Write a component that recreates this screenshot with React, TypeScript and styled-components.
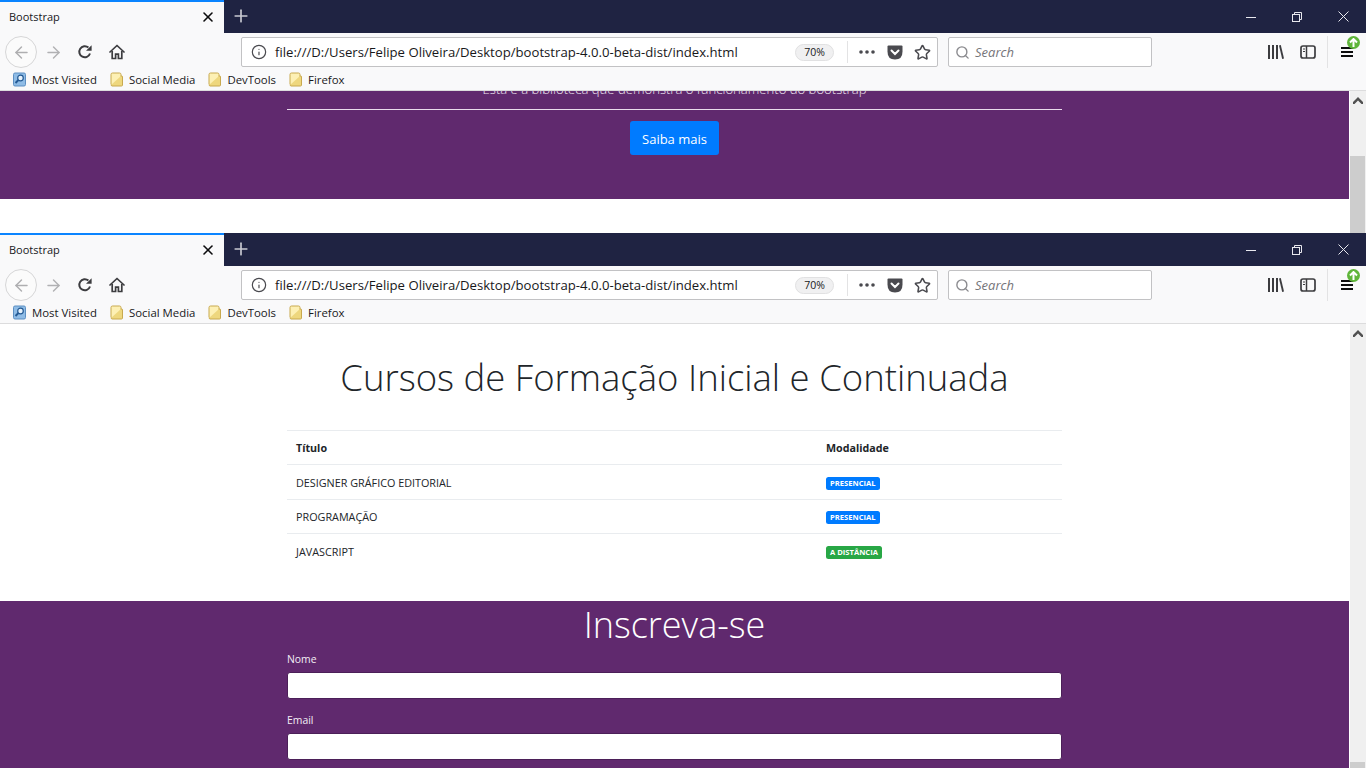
import React from 'react';
import styled, { createGlobalStyle } from 'styled-components';
import { ArrowLeft, ArrowRight, Info, Plus, Search, Star, X } from 'lucide-react';

const GlobalStyle = createGlobalStyle`
  html, body {
    margin: 0;
    padding: 0;
    height: 768px;
    overflow: hidden;
    background: #fff;
    font-family: "Open Sans", "Noto Sans", sans-serif;
  }
  * { box-sizing: border-box; }
`;

const Screen = styled.div`
  width: 1366px;
  height: 768px;
  display: flex;
  flex-direction: column;
  overflow: hidden;
`;

const Win = styled.section<{ $height: number }>`
  height: ${p => p.$height}px;
  flex: none;
  display: flex;
  flex-direction: column;
  overflow: hidden;
`;

const TabStrip = styled.div`
  height: 33px;
  flex: none;
  display: flex;
  align-items: stretch;
  background: #1f2342;
`;

const Tab = styled.div`
  width: 224px;
  display: flex;
  align-items: center;
  justify-content: space-between;
  padding: 0 8px 2px 9px;
  background: #f9f9fa;
  border-top: 2px solid #0a84ff;
  font-size: 11px;
  color: #18181a;
`;

const NewTab = styled.div`
  width: 34px;
  padding-bottom: 2px;
  display: flex;
  align-items: center;
  justify-content: center;
  color: #c9cad2;
`;

const Grow = styled.div`
  flex: 1;
`;

const WinButton = styled.div`
  width: 46px;
  display: flex;
  align-items: center;
  justify-content: center;
  color: #e8e8ee;
`;

const NavBar = styled.div`
  height: 36px;
  flex: none;
  display: flex;
  align-items: center;
  padding: 2px 0 0 5px;
  background: #f9f9fa;
`;

const BackButton = styled.div`
  width: 32px;
  height: 32px;
  border: 1px solid #d6d6d7;
  border-radius: 50%;
  display: flex;
  align-items: center;
  justify-content: center;
  color: #aeaeb0;
  background: #fbfbfb;
`;

const NavButton = styled.div<{ $muted?: boolean }>`
  width: 32px;
  height: 32px;
  flex: none;
  display: flex;
  align-items: center;
  justify-content: center;
  color: ${p => (p.$muted ? '#b1b1b3' : '#3c3c3f')};
`;

const UrlBar = styled.div`
  margin-left: 108px;
  width: 697px;
  height: 30px;
  flex: none;
  display: flex;
  align-items: center;
  background: #fff;
  border: 1px solid #c2c2c4;
  border-radius: 2px;
  padding-left: 9px;
  color: #4a4a4f;
`;

const UrlText = styled.span`
  margin-left: 8px;
  width: 521px;
  font-size: 13.15px;
  color: #18181a;
  white-space: nowrap;
`;

const ZoomPill = styled.span`
  width: 39px;
  height: 17px;
  border: 1px solid #e1e1e2;
  border-radius: 9px;
  background: #f0f0f1;
  font-size: 10.5px;
  line-height: 15px;
  text-align: center;
  color: #18181a;
`;

const UrlDivider = styled.span`
  width: 1px;
  height: 22px;
  margin: 0 5px 0 13px;
  background: #e3e3e4;
`;

const PageAction = styled.span`
  width: 28px;
  height: 24px;
  display: flex;
  align-items: center;
  justify-content: center;
  color: #4a4a4f;
`;

const SearchBox = styled.div`
  margin-left: 10px;
  width: 204px;
  height: 30px;
  flex: none;
  display: flex;
  align-items: center;
  gap: 5px;
  padding-left: 6px;
  background: #fff;
  border: 1px solid #c2c2c4;
  border-radius: 2px;
  font-size: 13px;
  font-style: italic;
  color: #75757a;
`;

const ToolGroup = styled.div`
  margin-left: 108px;
  display: flex;
  align-items: center;
`;

const ToolDivider = styled.span`
  width: 1px;
  height: 32px;
  margin: 0 3px;
  background: #e3e3e4;
`;

const MenuButton = styled(NavButton)`
  position: relative;
`;

const UpdateBadge = styled.span`
  position: absolute;
  top: 0;
  right: 3px;
  width: 13px;
  height: 13px;
  border-radius: 50%;
  background: #5fb53a;
  display: flex;
  align-items: center;
  justify-content: center;
`;

const Bookmarks = styled.div`
  height: 22px;
  flex: none;
  display: flex;
  align-items: center;
  padding: 0 0 1px 13px;
  background: #f9f9fa;
  border-bottom: 1px solid #dcdcdd;
  font-size: 11.4px;
  color: #18181a;
`;

const Bookmark = styled.div`
  display: flex;
  align-items: center;
  gap: 6px;
  margin-right: 13px;
  white-space: nowrap;
`;

const Body = styled.div`
  flex: 1;
  min-height: 0;
  display: flex;
`;

const Viewport = styled.main`
  flex: 1;
  min-width: 0;
  overflow: hidden;
  background: #fff;
`;

const ScrollTrack = styled.div<{ $thumbOffset: number }>`
  width: 17px;
  flex: none;
  display: flex;
  flex-direction: column;
  align-items: flex-start;
  padding-top: 6px;
  background: #f0f0f0;
  border-left: 1px solid #fff;
  color: #505050;

  svg {
    margin-left: 3px;
    margin-bottom: ${p => p.$thumbOffset}px;
    flex: none;
  }
`;

const Thumb = styled.div`
  width: 15px;
  flex: 1;
  background: #cdcdcd;
`;

const Purple = styled.div`
  background: #60296e;
  color: #fff;
`;

const Container = styled.div`
  width: 775px;
  margin: 0 auto;
`;

const Hero = styled(Purple)`
  height: 108px;
  text-align: center;
`;

const Lead = styled.p`
  margin: 0;
  position: relative;
  top: -12px;
  height: 18px;
  line-height: 20px;
  font-size: 13.1px;
  font-weight: 300;
  color: #efe7f2;
  white-space: nowrap;
`;

const Rule = styled.hr`
  margin: 0 0 11px;
  border: 0;
  border-top: 1px solid #e9dcec;
  height: 1px;
`;

const PrimaryButton = styled.a`
  display: inline-block;
  width: 89px;
  height: 34px;
  line-height: 36px;
  background: #007bff;
  border-radius: 3px;
  color: #fff;
  font-size: 13px;
  text-align: center;
`;

const Courses = styled.div`
  padding: 29px 0 32px;
`;

const Title = styled.h1`
  margin: 0 0 29px;
  font-size: 36.5px;
  line-height: 48px;
  font-weight: 300;
  color: #212529;
  text-align: center;
  white-space: nowrap;
`;

const Table = styled.table`
  width: 100%;
  border-collapse: collapse;
  font-size: 10.8px;
  color: #212529;
  table-layout: fixed;

  tbody tr:nth-child(odd) td {
    height: 35px;
  }
  tbody tr:nth-child(even) td {
    height: 34px;
  }
`;

const Th = styled.th<{ $width?: number }>`
  width: ${p => (p.$width ? `${p.$width}px` : 'auto')};
  height: 34px;
  padding: 0 9px;
  text-align: left;
  font-size: 10.7px;
  font-weight: 700;
  border-top: 1px solid #e9ecef;
`;

const Td = styled.td`
  padding: 0 9px;
  border-top: 1px solid #e9ecef;
`;

const Badge = styled.span<{ $tone: 'blue' | 'green' }>`
  display: inline-block;
  height: 13px;
  padding: 0 4px;
  border-radius: 2.5px;
  background: ${p => (p.$tone === 'blue' ? '#007bff' : '#28a745')};
  color: #fff;
  font-size: 7.6px;
  line-height: 13px;
  font-weight: 700;
  vertical-align: middle;
`;

const Signup = styled(Purple)`
  height: 170px;
`;

const SignupTitle = styled.h2`
  margin: 0 0 2px;
  font-size: 36px;
  line-height: 48px;
  font-weight: 300;
  text-align: center;
`;

const Field = styled.div`
  margin-bottom: 13px;
`;

const FieldLabel = styled.label`
  display: block;
  height: 21px;
  line-height: 17px;
  font-size: 10.4px;
  color: #f3eef5;
`;

const TextInput = styled.input`
  display: block;
  width: 100%;
  height: 27px;
  background: #fff;
  border: 1px solid #4b1f58;
  border-radius: 3px;
`;

const Svg = styled.svg`
  display: block;
  flex: none;
`;

const FolderIcon = () => (
  <Svg width="13" height="15" viewBox="0 0 13 15">
    <path d="M1 2.5 Q1 1 2.5 1 H9.5 Q11 1 11 2.5 V13 H2 Q1 13 1 12 Z" fill="#fdf0b4" stroke="#c8a94f" />
    <path d="M11 4 H12 Q12.5 4 12.5 5 V13 Q12.5 14 11.5 14 H2 Q1.5 14 1 13" fill="#eed77e" stroke="#c8a94f" />
  </Svg>
);

const MostVisitedIcon = () => (
  <Svg width="13" height="15" viewBox="0 0 13 15">
    <rect x="0.5" y="1" width="12" height="13" rx="1.5" fill="#8fbce6" stroke="#5c8fc2" />
    <circle cx="7.5" cy="6" r="2.8" fill="#e6f2fc" stroke="#245a94" strokeWidth="1.2" />
    <path d="M5.4 8 L2.5 11" stroke="#245a94" strokeWidth="1.8" />
  </Svg>
);

const ReloadIcon = () => (
  <Svg width="16" height="16" viewBox="0 0 16 16" fill="none" stroke="currentColor">
    <path d="M13 9.5 A5.5 5.5 0 1 1 11.4 3.6" strokeWidth="2" />
    <path d="M9 6.8 H14.6 V1.2 Z" fill="currentColor" stroke="none" />
  </Svg>
);

const HomeIcon = () => (
  <Svg width="16" height="16" viewBox="0 0 16 16" fill="none" stroke="currentColor" strokeWidth="1.7">
    <path d="M1 8 L8 1.5 L15 8" strokeLinejoin="round" strokeLinecap="round" />
    <path d="M3.2 7 V14.5 H6.6 V10.2 H9.4 V14.5 H12.8 V7" />
  </Svg>
);

const PocketIcon = () => (
  <Svg width="16" height="15" viewBox="0 0 16 15">
    <path d="M1.5 0.5 H14.5 Q15.5 0.5 15.5 1.5 V6.5 Q15.5 14.5 8 14.5 Q0.5 14.5 0.5 6.5 V1.5 Q0.5 0.5 1.5 0.5 Z" fill="currentColor" />
    <path d="M4.5 5.5 L8 9 L11.5 5.5" fill="none" stroke="#fff" strokeWidth="2" strokeLinecap="round" />
  </Svg>
);

const LibraryIcon = () => (
  <Svg width="16" height="14" viewBox="0 0 16 14" fill="currentColor">
    <rect x="0" y="0" width="2" height="14" />
    <rect x="4" y="0" width="2" height="14" />
    <rect x="8" y="0" width="2" height="14" />
    <path d="M11 0.5 L12.8 0 L16 13.5 L14.2 14 Z" />
  </Svg>
);

const SidebarIcon = () => (
  <Svg width="16" height="14" viewBox="0 0 16 14" fill="none" stroke="currentColor">
    <rect x="1" y="1" width="14" height="12" rx="2" strokeWidth="1.7" />
    <path d="M6.5 1 V13" strokeWidth="1.5" />
    <path d="M3 4 H5 M3 6.5 H5" strokeWidth="1" />
  </Svg>
);

const MenuIcon = () => (
  <Svg width="12" height="12" viewBox="0 0 12 12" fill="#0c0c0d">
    <rect x="0" y="1" width="12" height="2" />
    <rect x="0" y="5" width="12" height="2" />
    <rect x="0" y="9" width="12" height="2" />
  </Svg>
);

const MinimizeIcon = () => (
  <Svg width="10" height="10" viewBox="0 0 10 10" stroke="currentColor">
    <path d="M0 5.5 H10" />
  </Svg>
);

const RestoreIcon = () => (
  <Svg width="10" height="10" viewBox="0 0 10 10" fill="none" stroke="currentColor">
    <rect x="0.5" y="2.5" width="7" height="7" />
    <path d="M2.5 2.5 V0.5 H9.5 V7.5 H7.5" />
  </Svg>
);

const CloseIcon = () => (
  <Svg width="11" height="11" viewBox="0 0 11 11" stroke="currentColor">
    <path d="M0.5 0.5 L10.5 10.5 M10.5 0.5 L0.5 10.5" />
  </Svg>
);

const ChevronUp = () => (
  <Svg width="10" height="7" viewBox="0 0 10 7" fill="currentColor">
    <path d="M5 0 L10 5 V7 H8.5 L5 3.5 L1.5 7 H0 V5 Z" />
  </Svg>
);

const ArrowUpBadge = () => (
  <Svg width="9" height="9" viewBox="0 0 9 9" fill="none" stroke="#fff" strokeWidth="2">
    <path d="M4.5 9 V1.5 M1 4.5 L4.5 1 L8 4.5" />
  </Svg>
);

const BrowserChrome = () => (
  <>
    <TabStrip>
      <Tab>
        <span>Bootstrap</span>
        <X size={16} strokeWidth={2.4} color="#0c0c0d" />
      </Tab>
      <NewTab>
        <Plus size={20} strokeWidth={2} />
      </NewTab>
      <Grow />
      <WinButton><MinimizeIcon /></WinButton>
      <WinButton><RestoreIcon /></WinButton>
      <WinButton><CloseIcon /></WinButton>
    </TabStrip>
    <NavBar>
      <BackButton><ArrowLeft size={19} strokeWidth={1.8} /></BackButton>
      <NavButton $muted><ArrowRight size={19} strokeWidth={1.8} /></NavButton>
      <NavButton><ReloadIcon /></NavButton>
      <NavButton><HomeIcon /></NavButton>
      <UrlBar>
        <Info size={16} strokeWidth={1.8} />
        <UrlText>file:///D:/Users/Felipe Oliveira/Desktop/bootstrap-4.0.0-beta-dist/index.html</UrlText>
        <ZoomPill>70%</ZoomPill>
        <UrlDivider />
        <PageAction>
          <Svg width="16" height="4" viewBox="0 0 16 4" fill="currentColor">
            <circle cx="2" cy="2" r="1.8" />
            <circle cx="8" cy="2" r="1.8" />
            <circle cx="14" cy="2" r="1.8" />
          </Svg>
        </PageAction>
        <PageAction><PocketIcon /></PageAction>
        <PageAction><Star size={17} strokeWidth={2.2} /></PageAction>
      </UrlBar>
      <SearchBox>
        <Search size={15} strokeWidth={2.2} color="#8a8a8e" />
        <span>Search</span>
      </SearchBox>
      <ToolGroup>
        <NavButton><LibraryIcon /></NavButton>
        <NavButton><SidebarIcon /></NavButton>
        <ToolDivider />
        <MenuButton>
          <MenuIcon />
          <UpdateBadge><ArrowUpBadge /></UpdateBadge>
        </MenuButton>
      </ToolGroup>
    </NavBar>
    <Bookmarks>
      <Bookmark><MostVisitedIcon />Most Visited</Bookmark>
      <Bookmark><FolderIcon />Social Media</Bookmark>
      <Bookmark><FolderIcon />DevTools</Bookmark>
      <Bookmark><FolderIcon />Firefox</Bookmark>
    </Bookmarks>
  </>
);

const courses = [
  { title: 'DESIGNER GRÁFICO EDITORIAL', mode: 'PRESENCIAL', tone: 'blue' as const },
  { title: 'PROGRAMAÇÃO', mode: 'PRESENCIAL', tone: 'blue' as const },
  { title: 'JAVASCRIPT', mode: 'A DISTÂNCIA', tone: 'green' as const },
];

export default function App() {
  return (
    <Screen>
      <GlobalStyle />
      <Win $height={233}>
        <BrowserChrome />
        <Body>
          <Viewport>
            <Hero>
              <Container>
                <Lead>Esta é a biblioteca que demonstra o funcionamento do bootstrap</Lead>
                <Rule />
                <PrimaryButton>Saiba mais</PrimaryButton>
              </Container>
            </Hero>
          </Viewport>
          <ScrollTrack $thumbOffset={52}>
            <ChevronUp />
            <Thumb />
          </ScrollTrack>
        </Body>
      </Win>
      <Win $height={535}>
        <BrowserChrome />
        <Body>
          <Viewport>
            <Courses>
              <Container>
                <Title>Cursos de Formação Inicial e Continuada</Title>
                <Table>
                  <thead>
                    <tr>
                      <Th $width={530}>Título</Th>
                      <Th>Modalidade</Th>
                    </tr>
                  </thead>
                  <tbody>
                    {courses.map(c => (
                      <tr key={c.title}>
                        <Td>{c.title}</Td>
                        <Td><Badge $tone={c.tone}>{c.mode}</Badge></Td>
                      </tr>
                    ))}
                  </tbody>
                </Table>
              </Container>
            </Courses>
            <Signup>
              <Container>
                <SignupTitle>Inscreva-se</SignupTitle>
                <Field>
                  <FieldLabel>Nome</FieldLabel>
                  <TextInput type="text" />
                </Field>
                <Field>
                  <FieldLabel>Email</FieldLabel>
                  <TextInput type="email" />
                </Field>
              </Container>
            </Signup>
          </Viewport>
          <ScrollTrack $thumbOffset={425}>
            <ChevronUp />
            <Thumb />
          </ScrollTrack>
        </Body>
      </Win>
    </Screen>
  );
}
